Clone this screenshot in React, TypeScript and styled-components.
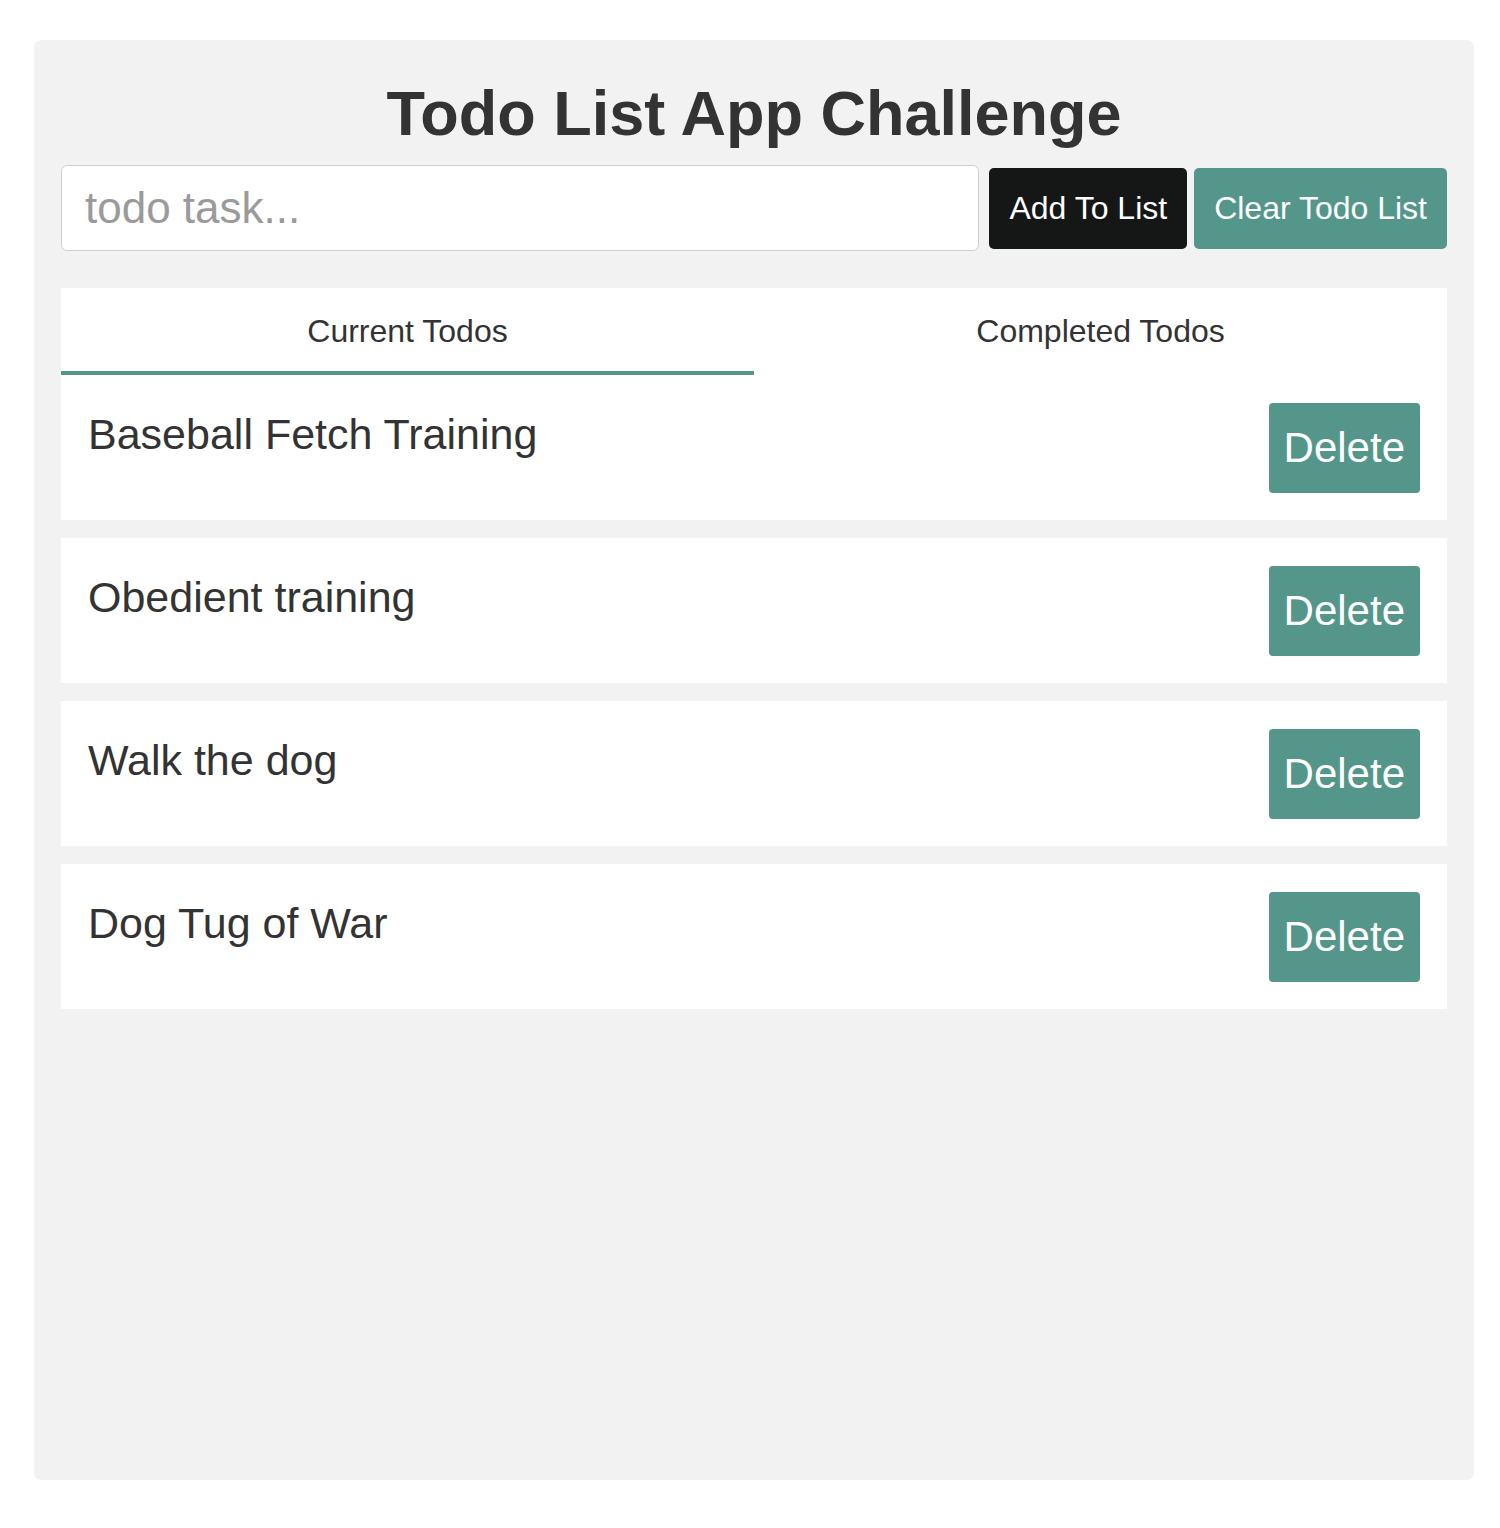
import React, { useState } from "react";
import styled, { createGlobalStyle } from "styled-components";

const GlobalStyle = createGlobalStyle`
  html, body {
    margin: 0;
    padding: 0;
    background: #ffffff;
    font-family: "Liberation Sans", Arial, Helvetica, sans-serif;
    color: #333333;
  }
  * { box-sizing: border-box; }
`;

const Page = styled.div`
  padding: 40px 26px 48px 34px;
`;

const Panel = styled.main`
  width: 1440px;
  min-height: 1440px;
  background: #f2f2f2;
  border-radius: 7px;
  padding: 42px 27px 27px 27px;
  display: flex;
  flex-direction: column;
`;

const Title = styled.h1`
  margin: 0 0 20px 0;
  font-size: 63px;
  line-height: 1;
  font-weight: 700;
  text-align: center;
  color: #333333;
`;

const InputRow = styled.div`
  display: flex;
  align-items: center;
  gap: 7px;
`;

const TaskInput = styled.input`
  flex: 1;
  height: 86px;
  border: 1px solid #cfcfcf;
  border-radius: 6px;
  background: #ffffff;
  padding: 0 23px;
  font-family: "Liberation Sans", Arial, sans-serif;
  font-size: 44px;
  color: #333333;
  outline: none;
  margin-right: 3px;
  &::placeholder {
    color: #9a9a9a;
  }
`;

const ActionButton = styled.button<{ $variant: "dark" | "teal" }>`
  height: 81px;
  border: none;
  border-radius: 5px;
  padding: 0 20px;
  font-family: "Liberation Sans", Arial, sans-serif;
  font-size: 32px;
  color: #ffffff;
  background: ${(p) => (p.$variant === "dark" ? "#151716" : "#54978a")};
  cursor: pointer;
  white-space: nowrap;
`;

const Tabs = styled.div`
  margin-top: 37px;
  display: grid;
  grid-template-columns: 1fr 1fr;
  background: #ffffff;
`;

const Tab = styled.button<{ $active: boolean }>`
  height: 87px;
  border: none;
  background: #ffffff;
  border-bottom: 4px solid ${(p) => (p.$active ? "#54978a" : "transparent")};
  font-family: "Liberation Sans", Arial, sans-serif;
  font-size: 32px;
  color: #333333;
  padding: 3px 0 0 0;
  cursor: pointer;
`;

const List = styled.ul`
  list-style: none;
  margin: 0;
  padding: 0;
  display: flex;
  flex-direction: column;
  gap: 18px;
`;

const Card = styled.li`
  background: #ffffff;
  display: flex;
  justify-content: space-between;
  align-items: flex-start;
  padding: 28px 27px 27px 27px;
`;

const TodoText = styled.span`
  font-size: 43px;
  line-height: 1;
  margin-top: 10px;
  color: #333333;
`;

const DeleteButton = styled.button`
  height: 90px;
  border: none;
  border-radius: 4px;
  background: #54978a;
  color: #ffffff;
  font-family: "Liberation Sans", Arial, sans-serif;
  font-size: 42px;
  padding: 0 15px;
  cursor: pointer;
`;

const initial = ["Baseball Fetch Training", "Obedient training", "Walk the dog", "Dog Tug of War"];

export default function App() {
  const [todos, setTodos] = useState<string[]>(initial);
  const [tab, setTab] = useState<"current" | "completed">("current");
  const [value, setValue] = useState("");

  return (
    <>
      <GlobalStyle />
      <Page>
        <Panel>
          <Title>Todo List App Challenge</Title>
          <InputRow>
            <TaskInput
              placeholder="todo task..."
              value={value}
              onChange={(e) => setValue(e.target.value)}
            />
            <ActionButton
              $variant="dark"
              onClick={() => {
                if (value.trim()) {
                  setTodos([...todos, value.trim()]);
                  setValue("");
                }
              }}
            >
              Add To List
            </ActionButton>
            <ActionButton $variant="teal" onClick={() => setTodos([])}>
              Clear Todo List
            </ActionButton>
          </InputRow>
          <Tabs>
            <Tab $active={tab === "current"} onClick={() => setTab("current")}>
              Current Todos
            </Tab>
            <Tab $active={tab === "completed"} onClick={() => setTab("completed")}>
              Completed Todos
            </Tab>
          </Tabs>
          {tab === "current" && (
            <List>
              {todos.map((t, i) => (
                <Card key={t + i}>
                  <TodoText>{t}</TodoText>
                  <DeleteButton onClick={() => setTodos(todos.filter((_, j) => j !== i))}>
                    Delete
                  </DeleteButton>
                </Card>
              ))}
            </List>
          )}
        </Panel>
      </Page>
    </>
  );
}
